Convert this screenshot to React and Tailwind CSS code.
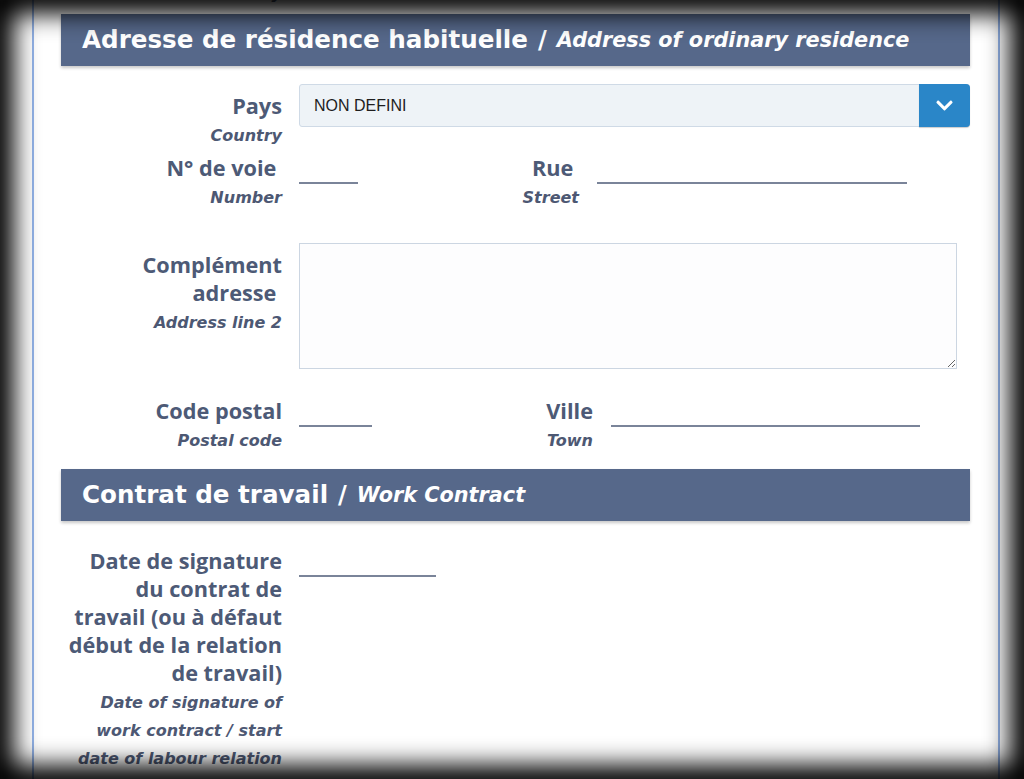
import { FaChevronDown } from 'react-icons/fa'

const LABEL_FONT = "font-['Open_Sans','Liberation_Sans',sans-serif]"
const SUB_FONT = "font-['DejaVu_Sans','Liberation_Sans',sans-serif]"

function Label({ main, sub }) {
  return (
    <div className="w-[221px] shrink-0 pt-[8px] text-right">
      <div className={`${LABEL_FONT} text-[21.7px] font-bold leading-[28px] text-[#4d5a76]`}>{main}</div>
      <div className={`${SUB_FONT} pt-[2px] text-[16px] font-bold italic leading-[28px] text-[#4d5873]`}>{sub}</div>
    </div>
  )
}

function LineInput({ width }) {
  return <div className={`h-[38px] shrink-0 border-b-2 border-[#7a8499] ${width}`} />
}

function SectionHeader({ title, subtitle }) {
  return (
    <div className={`${SUB_FONT} flex h-[52px] items-center bg-[#56688a] pl-[21px] font-bold text-white shadow-[0_2px_3px_rgba(0,0,0,0.22)]`}>
      <span className="text-[24.6px]">{title}</span>
      <span className="px-[10px] text-[24px]">/</span>
      <span className="pt-[2px] text-[20.8px] italic">{subtitle}</span>
    </div>
  )
}

export default function App() {
  return (
    <div className="relative h-[779px] w-[1024px] overflow-hidden bg-white">
      <div className="ml-[32px] h-full w-[968px] border-x-2 border-[#93b3e8] px-[27px] pr-[28px]">
        {/* tail of the previous section, cut off at the top */}
        <div className="flex h-[14px]">
          <div className={`${SUB_FONT} -mt-[20px] w-[221px] text-right text-[16px] font-bold italic leading-[28px] text-[#4d5873]`}>
            Nationality
          </div>
        </div>

        <SectionHeader title="Adresse de résidence habituelle" subtitle="Address of ordinary residence" />

        <div className="mt-[18px] flex h-[62px] gap-[17px]">
          <Label main="Pays" sub="Country" />
          <div className="flex h-[43px] flex-1 items-stretch rounded-[3px] border border-[#cfdae6] bg-[#eef3f7]">
            <div className="flex flex-1 items-center pl-[14px] font-['Liberation_Sans',sans-serif] text-[16px] text-[#1e1e1e]">
              NON DEFINI
            </div>
            <div className="-m-px flex w-[51px] items-center justify-center rounded-r-[4px] bg-[#2a86c8] text-white shadow-[0_1px_1px_rgba(0,0,0,0.2)]">
              <FaChevronDown size={19} />
            </div>
          </div>
        </div>

        <div className="flex h-[97px] gap-[17px]">
          <Label main={'N° de voie\u00a0'} sub="Number" />
          <div className="flex flex-1">
            <LineInput width="w-[59px]" />
            <div className="w-[221px] pt-[8px] text-right">
              <div className={`${LABEL_FONT} text-[21.7px] font-bold leading-[28px] text-[#4d5a76]`}>Rue&nbsp;</div>
              <div className={`${SUB_FONT} pt-[2px] text-[16px] font-bold italic leading-[28px] text-[#4d5873]`}>Street</div>
            </div>
            <div className="ml-[18px]">
              <LineInput width="w-[310px]" />
            </div>
          </div>
        </div>

        <div className="flex h-[146px] gap-[17px]">
          <Label main={<>Complément<br />adresse&nbsp;</>} sub="Address line 2" />
          <textarea className="h-[126px] w-[658px] border border-[#ccd6e2] bg-[#fdfdfe] outline-none" />
        </div>

        <div className="flex h-[80px] gap-[17px]">
          <Label main="Code postal" sub="Postal code" />
          <div className="flex flex-1">
            <LineInput width="w-[73px]" />
            <div className="w-[221px] pt-[8px] text-right">
              <div className={`${LABEL_FONT} text-[21.7px] font-bold leading-[28px] text-[#4d5a76]`}>Ville</div>
              <div className={`${SUB_FONT} pt-[2px] text-[16px] font-bold italic leading-[28px] text-[#4d5873]`}>Town</div>
            </div>
            <div className="ml-[18px]">
              <LineInput width="w-[309px]" />
            </div>
          </div>
        </div>

        <SectionHeader title="Contrat de travail" subtitle="Work Contract" />

        <div className="mt-[18px] flex gap-[17px]">
          <Label
            main={<>Date de signature<br />du contrat de<br />travail (ou à défaut<br />début de la relation<br />de travail)</>}
            sub={<>Date of signature of<br />work contract / start<br />date of labour relation</>}
          />
          <LineInput width="w-[137px]" />
        </div>
      </div>

      {/* dark vignette framing the screenshot */}
      <div className="pointer-events-none absolute inset-0 shadow-[inset_0_0_24px_14px_#000]" />
    </div>
  )
}
